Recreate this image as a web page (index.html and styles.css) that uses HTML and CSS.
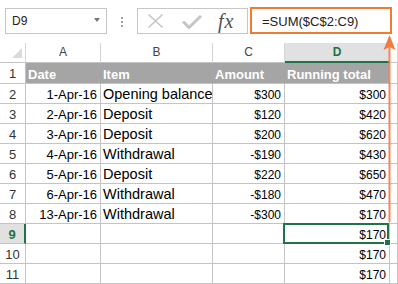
FILE: index.html
```html
<!DOCTYPE html>
<html lang="en">
<head>
    <meta charset="UTF-8">
    <title>Running total</title>
    <link rel="stylesheet" href="styles.css">
</head>
<body>
    <div class="sheet">
        <div class="formula-bar">
            <div class="name-box">
                <span>D9</span>
                <span class="caret"></span>
            </div>
            <div class="grip"><i></i><i></i><i></i></div>
            <div class="buttons">
                <svg class="icon-cancel" width="17" height="16" viewBox="0 0 17 16">
                    <path d="M1.5 1.5 L15.5 14.5 M15.5 1.5 L1.5 14.5" stroke="#c6c6c6" stroke-width="1.7" fill="none"/>
                </svg>
                <svg class="icon-enter" width="20" height="14" viewBox="0 0 20 14">
                    <path d="M1 6.5 L7 12.5 L19 1" stroke="#c6c6c6" stroke-width="3" fill="none"/>
                </svg>
                <span class="fx">fx</span>
            </div>
            <div class="formula">=SUM($C$2:C9)</div>
        </div>

        <div class="grid">
            <div class="row head">
                <div class="corner"><span class="select-all"></span></div>
                <div class="col">A</div>
                <div class="col">B</div>
                <div class="col">C</div>
                <div class="col active">D</div>
                <div class="col"></div>
            </div>
            <div class="row title">
                <div class="num">1</div>
                <div class="cell">Date</div>
                <div class="cell">Item</div>
                <div class="cell">Amount</div>
                <div class="cell">Running total</div>
                <div class="cell blank"></div>
            </div>
            <div class="row">
                <div class="num">2</div>
                <div class="cell date">1-Apr-16</div>
                <div class="cell text">Opening balance</div>
                <div class="cell money">$300</div>
                <div class="cell money">$300</div>
                <div class="cell"></div>
            </div>
            <div class="row">
                <div class="num">3</div>
                <div class="cell date">2-Apr-16</div>
                <div class="cell text">Deposit</div>
                <div class="cell money">$120</div>
                <div class="cell money">$420</div>
                <div class="cell"></div>
            </div>
            <div class="row">
                <div class="num">4</div>
                <div class="cell date">3-Apr-16</div>
                <div class="cell text">Deposit</div>
                <div class="cell money">$200</div>
                <div class="cell money">$620</div>
                <div class="cell"></div>
            </div>
            <div class="row">
                <div class="num">5</div>
                <div class="cell date">4-Apr-16</div>
                <div class="cell text">Withdrawal</div>
                <div class="cell money">-$190</div>
                <div class="cell money">$430</div>
                <div class="cell"></div>
            </div>
            <div class="row">
                <div class="num">6</div>
                <div class="cell date">5-Apr-16</div>
                <div class="cell text">Deposit</div>
                <div class="cell money">$220</div>
                <div class="cell money">$650</div>
                <div class="cell"></div>
            </div>
            <div class="row">
                <div class="num">7</div>
                <div class="cell date">6-Apr-16</div>
                <div class="cell text">Withdrawal</div>
                <div class="cell money">-$180</div>
                <div class="cell money">$470</div>
                <div class="cell"></div>
            </div>
            <div class="row">
                <div class="num">8</div>
                <div class="cell date">13-Apr-16</div>
                <div class="cell text">Withdrawal</div>
                <div class="cell money">-$300</div>
                <div class="cell money">$170</div>
                <div class="cell"></div>
            </div>
            <div class="row">
                <div class="num active">9</div>
                <div class="cell"></div>
                <div class="cell"></div>
                <div class="cell"></div>
                <div class="cell money selected">$170<span class="fill-handle"></span></div>
                <div class="cell"></div>
            </div>
            <div class="row">
                <div class="num">10</div>
                <div class="cell"></div>
                <div class="cell"></div>
                <div class="cell"></div>
                <div class="cell money">$170</div>
                <div class="cell"></div>
            </div>
            <div class="row">
                <div class="num">11</div>
                <div class="cell"></div>
                <div class="cell"></div>
                <div class="cell"></div>
                <div class="cell money">$170</div>
                <div class="cell"></div>
            </div>
        </div>

        <!-- callout from the formula to the selected cell -->
        <svg class="arrow" width="17" height="190" viewBox="0 0 17 190">
            <path d="M8.5 1 L14.5 16 L8.5 13 L2.5 16 Z" fill="#f07c3f"/>
            <rect x="7.5" y="13" width="2" height="175" fill="#f2875a"/>
        </svg>
    </div>
</body>
</html>
```

FILE: styles.css
```css
html, body {
    margin: 0;
    padding: 0;
    background-color: #fff;
}
body {
    font-family: 'Liberation Sans', Arial, sans-serif;
    color: #000;
    overflow: hidden;
}
.sheet {
    position: relative;
    width: 398px;
    height: 284px;
    overflow: hidden;
}

/* formula bar */
.formula-bar {
    display: flex;
    align-items: flex-start;
    height: 43px;
    padding-left: 5px;
    box-sizing: border-box;
}
.name-box {
    display: flex;
    align-items: center;
    justify-content: space-between;
    width: 102px;
    height: 26px;
    margin-top: 8px;
    padding: 0 6px;
    box-sizing: border-box;
    border: 1px solid #c6c6c6;
    font-size: 12px;
    line-height: 24px;
    color: #222;
}
.caret {
    width: 0;
    height: 0;
    border-left: 3.5px solid transparent;
    border-right: 3.5px solid transparent;
    border-top: 4px solid #777;
    margin-top: -2px;
}
.grip {
    display: flex;
    flex-direction: column;
    gap: 2px;
    margin: 17px 14px 0 14px;
}
.grip i {
    display: block;
    width: 2px;
    height: 2px;
    background-color: #a0a0a0;
}
.buttons {
    display: flex;
    align-items: center;
    width: 111px;
    height: 26px;
    margin-top: 8px;
    box-sizing: border-box;
    border: 1px solid #c6c6c6;
}
.icon-cancel {
    margin-left: 9px;
}
.icon-enter {
    margin-left: 18px;
    margin-top: 1px;
}
.fx {
    margin-left: 16px;
    font-family: 'Liberation Serif', 'Times New Roman', serif;
    font-style: italic;
    font-size: 20px;
    line-height: 20px;
    letter-spacing: 1px;
    color: #505050;
    margin-top: -1px;
}
.formula {
    width: 142px;
    height: 27px;
    margin-left: 2px;
    margin-top: 7px;
    box-sizing: border-box;
    border: 2px solid #ed7d31;
    padding: 2px 0 0 10px;
    font-size: 13px;
    line-height: 21px;
    color: #222;
    white-space: nowrap;
}

/* worksheet */
.row {
    display: grid;
    grid-template-columns: 26px 75px 112px 72px 105px 1fr;
    height: 20px;
}
.row.title {
    height: 21px;
}
.row > div {
    box-sizing: border-box;
    border-right: 1px solid #c4c4c4;
    border-bottom: 1px solid #c4c4c4;
    white-space: nowrap;
    overflow: hidden;
}
.head > div {
    border-right-color: #d6d6d6;
    border-bottom-color: #c4c4c4;
    text-align: center;
    font-size: 12px;
    line-height: 19px;
    color: #444;
}
.corner {
    position: relative;
}
.select-all {
    position: absolute;
    right: 3px;
    bottom: 4px;
    width: 0;
    height: 0;
    border-left: 10px solid transparent;
    border-bottom: 10px solid #dadada;
}
.head .col.active {
    background-color: #e1e1e1;
    border-bottom: 2px solid #217346;
    color: #217346;
    font-weight: bold;
}
.num {
    text-align: center;
    font-size: 13px;
    line-height: 17px;
    padding-top: 2px;
    color: #333;
}
.num.active {
    background-color: #e1e1e1;
    border-right: 2px solid #217346 !important;
    color: #217346;
    font-weight: bold;
}
.cell {
    padding: 2px 3px 0 2px;
    font-size: 14.5px;
    line-height: 17px;
}
.title .cell {
    background-color: #a5a5a5;
    border-right-color: #a5a5a5;
    border-bottom-color: #c4c4c4;
    color: #fff;
    font-weight: bold;
    font-size: 13px;
    padding-top: 3px;
}
.title .cell.blank {
    background-color: #fff;
    border-right-color: #c4c4c4;
}
.cell.text {
    text-overflow: clip;
}
.cell.date {
    text-align: right;
    font-size: 13px;
}
.cell.money {
    text-align: right;
    font-size: 12px;
    padding-top: 3px;
    line-height: 16px;
}
.cell.selected {
    position: relative;
    overflow: visible;
}
.cell.selected::after {
    content: "";
    position: absolute;
    top: -1px;
    left: -2px;
    right: 0;
    bottom: -1px;
    border: 2px solid #217346;
}
.fill-handle {
    position: absolute;
    right: -2px;
    bottom: -3px;
    width: 5px;
    height: 5px;
    background-color: #217346;
    border: 1px solid #fff;
    z-index: 1;
}
.arrow {
    position: absolute;
    left: 381px;
    top: 34px;
}
```
